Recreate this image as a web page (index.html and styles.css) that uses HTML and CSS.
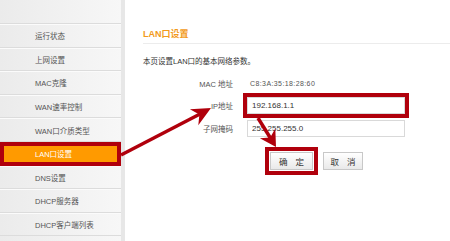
FILE: index.html
```html
<!DOCTYPE HTML>
<html>
<head>
<meta charset="utf-8">
<title>LAN口设置</title>
<link rel="stylesheet" href="styles.css">
</head>
<body>
<div class="page">
  <aside class="sidebar">
    <div class="sidebar-top"></div>
    <ul class="menu">
      <li>运行状态</li>
      <li>上网设置</li>
      <li>MAC克隆</li>
      <li>WAN速率控制</li>
      <li>WAN口介质类型</li>
      <li class="active">LAN口设置</li>
      <li>DNS设置</li>
      <li>DHCP服务器</li>
      <li>DHCP客户端列表</li>
    </ul>
  </aside>

  <main class="content">
    <h2 class="title">LAN口设置</h2>
    <p class="desc">本页设置LAN口的基本网络参数。</p>

    <div class="form">
      <div class="row"><label>MAC 地址</label><span class="mac">C8:3A:35:18:28:60</span></div>
      <div class="row"><label>IP地址</label><input type="text" class="field marked" value="192.168.1.1" /></div>
      <div class="row"><label>子网掩码</label><input type="text" class="field" value="255.255.255.0" /></div>
    </div>

    <div class="buttons">
      <button class="btn marked">确 定</button>
      <button class="btn cancel">取 消</button>
    </div>
  </main>

  <!-- annotation arrows drawn over the page -->
  <svg class="arrows" width="450" height="241" viewBox="0 0 450 241">
    <line x1="121" y1="155" x2="200" y2="114" />
    <polygon points="211,108 189.9,109.3 199.4,114.6 198.3,125.3" />
    <line x1="258" y1="118" x2="271" y2="139" />
    <polygon points="276,147 275.3,128.6 270.2,137.6 259.9,138.2" />
  </svg>
</div>
</body>
</html>
```

FILE: styles.css
```css
html, body {
  margin: 0;
  padding: 0;
  background: #fff;
}

body {
  font-family: "Liberation Sans", "Noto Sans CJK SC", sans-serif;
  color: #444;
}

.page {
  position: relative;
  display: flex;
  width: 450px;
  height: 241px;
  overflow: hidden;
}

.sidebar {
  width: 121px;
  flex: none;
  background: linear-gradient(to right, #ebebeb, #f7f7f7);
}

.sidebar-top {
  height: 23px;
  border-bottom: 1px solid #dcdcdc;
}

.menu {
  list-style: none;
  margin: 0;
  padding: 0;
}

.menu li {
  box-sizing: border-box;
  height: 23.6px;
  display: flex;
  align-items: center;
  padding-left: 35px;
  border-top: 1px solid #fbfbfb;
  border-bottom: 1px solid #dcdcdc;
  font-size: 7.5px;
  color: #555;
  white-space: nowrap;
}

.menu li.active {
  border: 4px solid #b0000c;
  padding-left: 31px;
  background: #ff9a00;
  color: #fff;
}

.content {
  flex: 1;
  border-left: 4px solid #e7e7e7;
  padding-left: 18px;
}

.title {
  margin: 0;
  padding: 28px 0 3px;
  font-size: 9px;
  line-height: 12px;
  font-weight: bold;
  color: #f29a1a;
  border-bottom: 1px solid #ececec;
}

.desc {
  margin: 12px 0 0;
  font-size: 7.5px;
  line-height: 12px;
  color: #333;
}

.form {
  margin-top: 6.5px;
  display: flex;
  flex-direction: column;
  gap: 5.5px;
}

.row {
  display: grid;
  grid-template-columns: 90px 1fr;
  column-gap: 14px;
  align-items: center;
  height: 17px;
}

.row label {
  text-align: right;
  font-size: 7.5px;
  color: #555;
}

.mac {
  padding-left: 3px;
  font-size: 7px;
  letter-spacing: 0.4px;
  color: #555;
}

.field {
  box-sizing: border-box;
  width: 158px;
  height: 17px;
  margin: 0;
  padding: 0 4px;
  border: 1px solid #d9d9d9;
  font-family: "Liberation Sans", sans-serif;
  font-size: 8px;
  color: #333;
  background: #fff;
}

.marked {
  outline: 4px solid #b0000c;
  outline-offset: 0;
}

.buttons {
  margin-top: 15.5px;
  padding-left: 127px;
  display: flex;
  gap: 10px;
}

.btn {
  box-sizing: border-box;
  width: 43px;
  height: 18px;
  margin: 0;
  padding: 0 0 0 3px;
  border: 1px solid #c8c8c8;
  border-radius: 0;
  background: linear-gradient(#ffffff, #e9e9e9);
  font-family: "Noto Sans CJK SC", sans-serif;
  font-size: 8.5px;
  letter-spacing: 3px;
  color: #333;
}

.btn.marked {
  outline-offset: 1px;
}

.btn.cancel {
  width: 40px;
}

.arrows {
  position: absolute;
  left: 0;
  top: 0;
  pointer-events: none;
}

.arrows line {
  stroke: #b0000c;
  stroke-width: 3.5;
}

.arrows polygon {
  fill: #b0000c;
}
```
